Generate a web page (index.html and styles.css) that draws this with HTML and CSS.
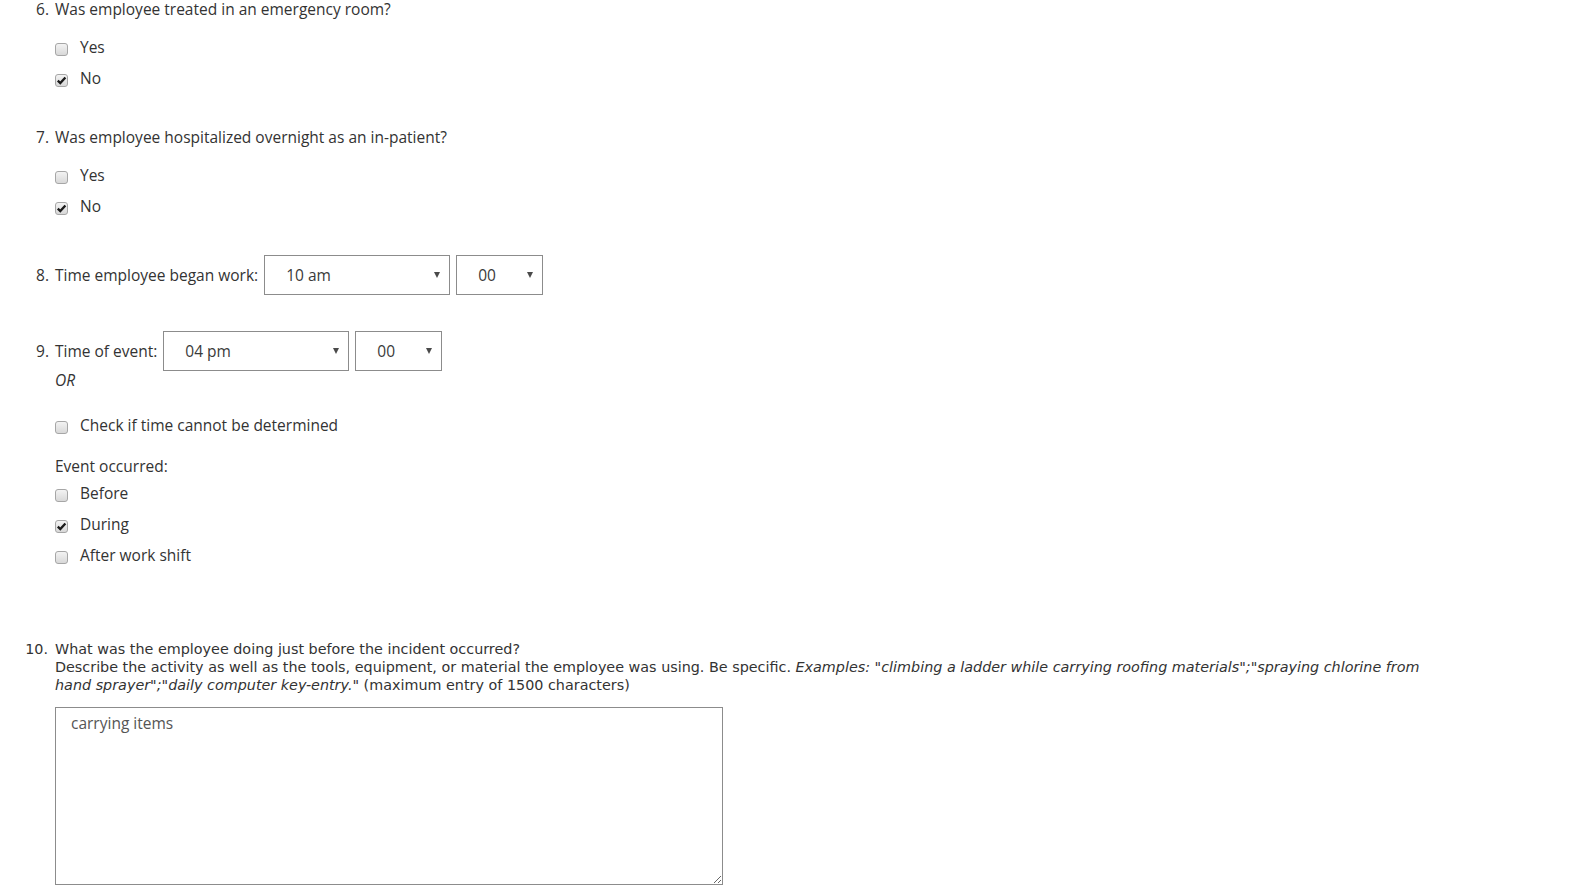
FILE: index.html
```html
<!DOCTYPE html>
<html lang="en">
<head>
<meta charset="utf-8">
<title>Incident form</title>
<link rel="stylesheet" href="styles.css">
</head>
<body>
<div class="form">
  <section class="q q6">
    <div class="num">6.</div>
    <div class="body">
      <div class="title">Was employee treated in an emergency room?</div>
      <div class="options">
        <label class="opt"><span class="cb"></span>Yes</label>
        <label class="opt"><span class="cb"><svg width="11" height="11" viewBox="0 0 11 11"><path d="M1.8 5.6 L4.3 8.1 L9.4 2.4" fill="none" stroke="#1a1a1a" stroke-width="2.3"/></svg></span>No</label>
      </div>
    </div>
  </section>

  <section class="q q7">
    <div class="num">7.</div>
    <div class="body">
      <div class="title">Was employee hospitalized overnight as an in-patient?</div>
      <div class="options">
        <label class="opt"><span class="cb"></span>Yes</label>
        <label class="opt"><span class="cb"><svg width="11" height="11" viewBox="0 0 11 11"><path d="M1.8 5.6 L4.3 8.1 L9.4 2.4" fill="none" stroke="#1a1a1a" stroke-width="2.3"/></svg></span>No</label>
      </div>
    </div>
  </section>

  <section class="q q8">
    <div class="num mid">8.</div>
    <div class="body row">
      <span class="label">Time employee began work:</span>
      <div class="sel sel-hour"><span>10 am</span><span class="arrow"></span></div>
      <div class="sel sel-min"><span>00</span><span class="arrow"></span></div>
    </div>
  </section>

  <section class="q q9">
    <div class="num top9">9.</div>
    <div class="body">
      <div class="row">
        <span class="label">Time of event:</span>
        <div class="sel sel-hour"><span>04 pm</span><span class="arrow"></span></div>
        <div class="sel sel-min"><span>00</span><span class="arrow"></span></div>
      </div>
      <div class="or">OR</div>
      <label class="opt check-undet"><span class="cb"></span>Check if time cannot be determined</label>
      <div class="event-label">Event occurred:</div>
      <div class="options tight">
        <label class="opt"><span class="cb"></span>Before</label>
        <label class="opt"><span class="cb"><svg width="11" height="11" viewBox="0 0 11 11"><path d="M1.8 5.6 L4.3 8.1 L9.4 2.4" fill="none" stroke="#1a1a1a" stroke-width="2.3"/></svg></span>During</label>
        <label class="opt"><span class="cb"></span>After work shift</label>
      </div>
    </div>
  </section>

  <section class="q q10">
    <div class="num">10.</div>
    <div class="body">
      <div class="line">What was the employee doing just before the incident occurred?</div>
      <div class="line">Describe the activity as well as the tools, equipment, or material the employee was using. Be specific. <em>Examples: "climbing a ladder while carrying roofing materials";"spraying chlorine from hand sprayer";"daily computer key-entry."</em> (maximum entry of 1500 characters)</div>
      <textarea class="answer">carrying items</textarea>
    </div>
  </section>
</div>
</body>
</html>
```
FILE: styles.css
```css
body {
  margin: 0;
  background: #fff;
  color: #333;
  font-family: "Open Sans", "Segoe UI", sans-serif;
  font-size: 15.5px;
}

.q {
  display: grid;
  grid-template-columns: 55px 1fr;
}

.num {
  text-align: right;
  padding-right: 6px;
  line-height: 18px;
}

.num.mid {
  align-self: center;
}

.num.top9 {
  line-height: 40px;
}

.title {
  line-height: 18px;
}

.options {
  margin-top: 19px;
  display: flex;
  flex-direction: column;
  gap: 11px;
}

.options.tight {
  margin-top: 7px;
}

.opt {
  display: flex;
  align-items: center;
  height: 20px;
  line-height: 20px;
}

.cb {
  width: 13px;
  height: 13px;
  box-sizing: border-box;
  border: 1px solid #a6a6a6;
  border-radius: 3px;
  background: linear-gradient(#f3f3f3, #d8d8d8);
  margin: 5px 12px 0 0;
  display: flex;
  align-items: center;
  justify-content: center;
  flex: none;
}

.cb svg {
  display: block;
}

.q7 { margin-top: 40px; }
.q8 { margin-top: 39px; }
.q9 { margin-top: 36px; }
.q10 { margin-top: 75px; }

.row {
  display: flex;
  align-items: center;
  gap: 6px;
}

.sel {
  display: flex;
  align-items: center;
  justify-content: space-between;
  height: 40px;
  box-sizing: border-box;
  border: 1px solid #8c8c8c;
  padding: 0 9px 0 21px;
  background: #fff;
  color: #3a3a3a;
}

.sel-hour { width: 186px; }
.sel-min { width: 87px; }

.arrow {
  width: 0;
  height: 0;
  border-left: 3px solid transparent;
  border-right: 3px solid transparent;
  border-top: 6px solid #4a4a4a;
  margin-top: -1px;
}

.or {
  font-style: italic;
  line-height: 18px;
}

.check-undet {
  margin-top: 26px;
}

.event-label {
  margin-top: 21px;
  line-height: 20px;
}

.q10 {
  font-family: "DejaVu Sans", sans-serif;
  font-size: 14.35px;
}

.q10 .num {
  padding-right: 7px;
}

.q10 .body {
  max-width: 1395px;
}

.line {
  line-height: 18px;
}

.answer {
  display: block;
  margin-top: 13px;
  width: 668px;
  height: 178px;
  box-sizing: border-box;
  border: 1px solid #8c8c8c;
  padding: 5px 15px;
  font-family: "Open Sans", "Segoe UI", sans-serif;
  font-size: 15.5px;
  line-height: 20px;
  color: #555;
  resize: both;
  outline: none;
}
```
